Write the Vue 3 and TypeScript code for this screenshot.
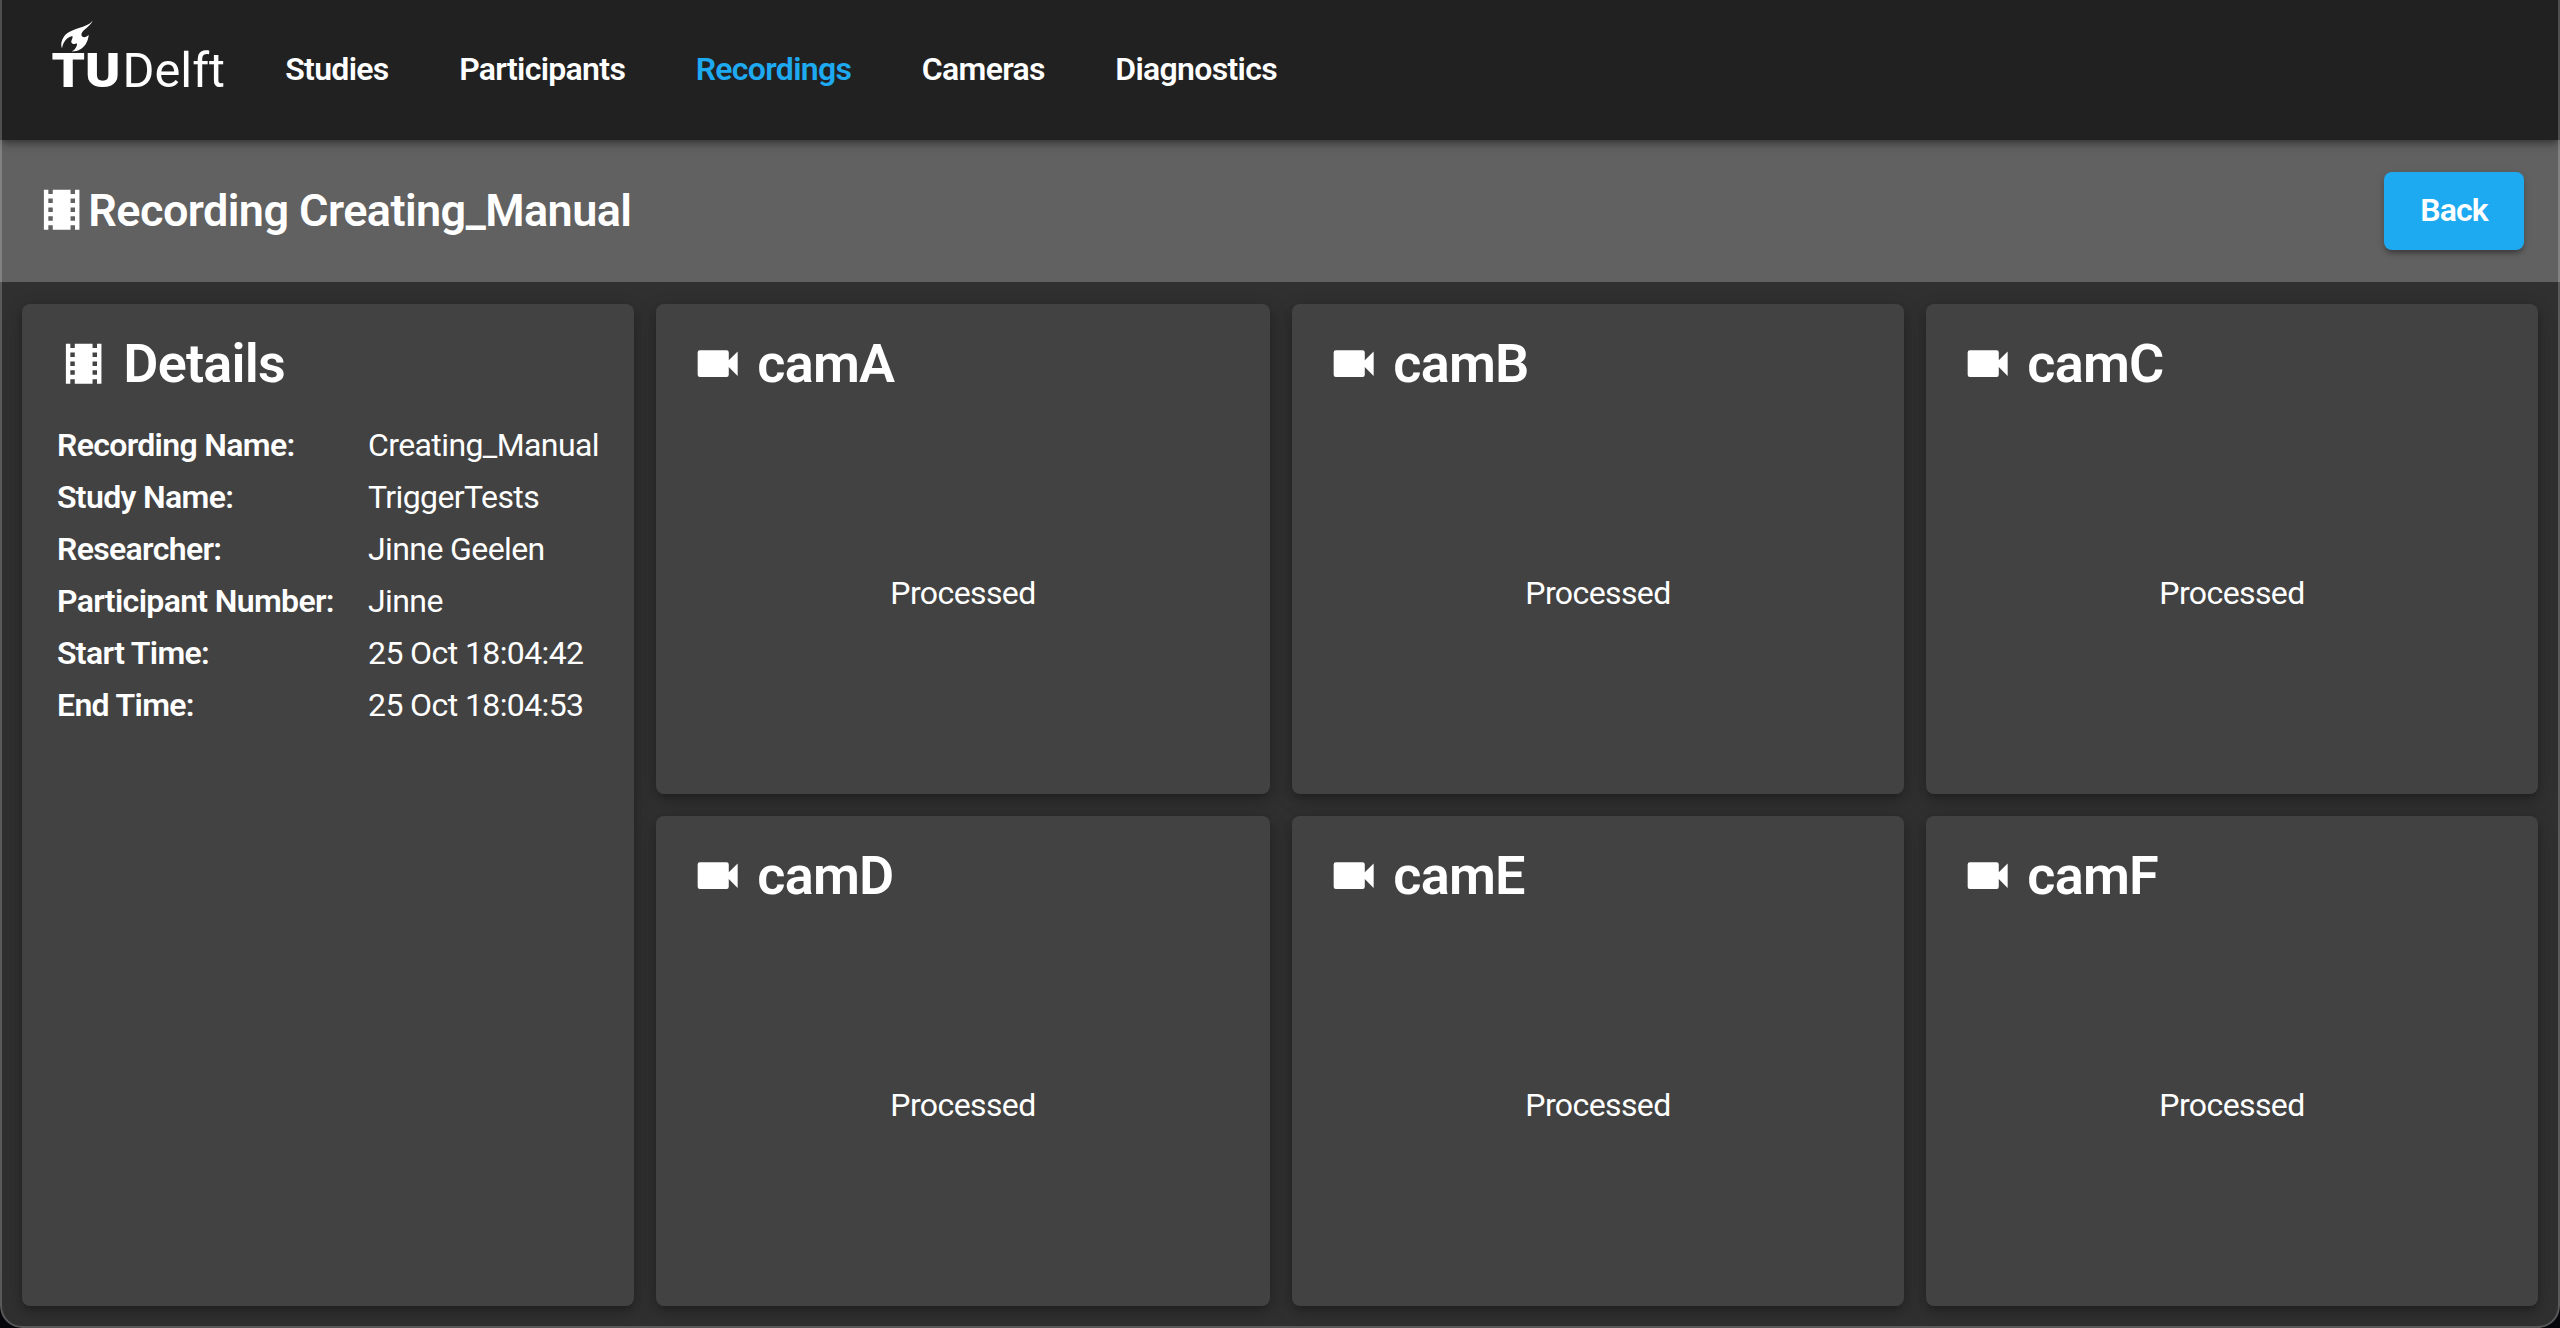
<script setup lang="ts">
interface NavItem { label: string; active?: boolean }
interface Detail { label: string; value: string }

const navItems: NavItem[] = [
  { label: 'Studies' },
  { label: 'Participants' },
  { label: 'Recordings', active: true },
  { label: 'Cameras' },
  { label: 'Diagnostics' },
]

const details: Detail[] = [
  { label: 'Recording Name:', value: 'Creating_Manual' },
  { label: 'Study Name:', value: 'TriggerTests' },
  { label: 'Researcher:', value: 'Jinne Geelen' },
  { label: 'Participant Number:', value: 'Jinne' },
  { label: 'Start Time:', value: '25 Oct 18:04:42' },
  { label: 'End Time:', value: '25 Oct 18:04:53' },
]

const cameras: string[] = ['camA', 'camB', 'camC', 'camD', 'camE', 'camF']

const filmstrip =
  'M18,9H16V7H18M18,13H16V11H18M18,17H16V15H18M8,9H6V7H8M8,13H6V11H8M8,17H6V15H8M18,3V5H16V3H8V5H6V3H4V21H6V19H8V21H16V19H18V21H20V3H18Z'
const video =
  'M17,10.5V7A1,1 0 0,0 16,6H4A1,1 0 0,0 3,7V17A1,1 0 0,0 4,18H16A1,1 0 0,0 17,17V13.5L21,17.5V6.5L17,10.5Z'
</script>

<template>
  <div class="desktop">
    <div class="window">
      <nav class="navbar">
        <svg class="logo" viewBox="0 0 180 80" role="img" aria-label="TU Delft">
          <path
            d="M42.700 10.300C40 14.500 35.500 16 30.500 17.500C24.500 19.500 17.500 21.500 14 26.500C11 31 10.600 35 12 38.600C13 32.500 16 28 21.500 26.300C23.500 26 22.500 28 21.500 30.500C20.500 33 23 34.600 25.300 33.800C28 32.500 27 35.500 26 37.200C24.800 39.500 23.500 40.500 21.500 41.500C29 41.500 33 38 35.500 34.500C37.500 31.500 38.500 28 38.700 24.800C36.500 27.500 32.500 28 31.500 25.500C31 23.500 32.500 21.500 34.500 19.800C38 17 41.500 14 42.700 10.300Z"
            fill="#fff"
          />
          <text x="1.500" y="77" class="logo-bold" textLength="69" lengthAdjust="spacingAndGlyphs">TU</text>
          <text x="72.500" y="77" class="logo-light" textLength="102.500" lengthAdjust="spacingAndGlyphs">Delft</text>
        </svg>
        <a v-for="item in navItems" :key="item.label" class="nav-link" :class="{ active: item.active }">{{ item.label }}</a>
      </nav>

      <header class="titlebar">
        <svg class="icon" viewBox="0 0 24 24"><path :d="filmstrip" /></svg>
        <h1>Recording Creating_Manual</h1>
        <button type="button" class="back">Back</button>
      </header>

      <main class="grid">
        <section class="card details">
          <div class="card-title">
            <svg class="icon" viewBox="0 0 24 24"><path :d="filmstrip" /></svg>
            <h2>Details</h2>
          </div>
          <dl>
            <template v-for="row in details" :key="row.label">
              <dt>{{ row.label }}</dt>
              <dd>{{ row.value }}</dd>
            </template>
          </dl>
        </section>
        <section v-for="camera in cameras" :key="camera" class="card">
          <div class="card-title">
            <svg class="icon" viewBox="0 0 24 24"><path :d="video" /></svg>
            <h2>{{ camera }}</h2>
          </div>
          <div class="status">Processed</div>
        </section>
      </main>
    </div>
  </div>
</template>

<style>
body {
  margin: 0;
  background: #05070c;
}
</style>

<style scoped>
.desktop {
  width: 2560px;
  height: 1328px;
  overflow: hidden;
  background: #05070c;
  color: #fff;
  font-family: Roboto, sans-serif;
  font-size: 32px;
  letter-spacing: -0.6px;
}
.window {
  position: relative;
  box-sizing: border-box;
  height: 1328px;
  padding: 0 2px 2px;
  display: flex;
  flex-direction: column;
  overflow: hidden;
  border-radius: 0 0 22px 22px;
  background: #303030;
}
/* translucent hairline around the window */
.window::after {
  content: '';
  position: absolute;
  inset: 0;
  border: 2px solid rgba(255, 255, 255, 0.2);
  border-top: 0;
  border-radius: 0 0 22px 22px;
  pointer-events: none;
  z-index: 3;
}
.navbar {
  position: relative;
  z-index: 2;
  flex: none;
  height: 140px;
  margin: 0 -2px;
  padding-left: 50px;
  box-sizing: border-box;
  display: flex;
  align-items: center;
  background: #212121;
  box-shadow: 0 4px 8px -2px rgba(0, 0, 0, 0.4), 0 2px 12px rgba(0, 0, 0, 0.2);
}
.logo {
  width: 180px;
  height: 80px;
  margin: 0 20px 40px 0;
  overflow: visible;
  letter-spacing: 0;
}
.logo-bold {
  font: 900 48px Roboto, sans-serif;
  fill: #fff;
}
.logo-light {
  font: 400 48px Roboto, sans-serif;
  fill: #fff;
}
.nav-link {
  margin: 0 35.25px;
  padding-bottom: 2px;
  font-weight: 600;
  letter-spacing: -0.68px;
}
.active {
  color: #1eaaf1;
}
.titlebar {
  flex: none;
  height: 142px;
  margin: 0 -2px;
  padding: 0 36px 0 35px;
  box-sizing: border-box;
  display: flex;
  align-items: center;
  background: #616161;
}
.icon {
  flex: none;
  width: 53.33px;
  height: 53.33px;
  fill: #fff;
}
.titlebar .icon {
  margin-bottom: 2px;
}
h1 {
  margin: 0;
  padding-bottom: 1px;
  font-size: 45px;
  font-weight: 600;
  letter-spacing: -0.57px;
  white-space: nowrap;
}
.back {
  margin-left: auto;
  width: 140px;
  height: 78px;
  padding: 0 0 3px;
  border: 0;
  border-radius: 8px;
  background: #1eaaf1;
  color: #fff;
  font: 600 32px Roboto, sans-serif;
  letter-spacing: -0.9px;
  box-shadow: 0 6px 4px -4px rgba(0, 0, 0, 0.2), 0 4px 4px rgba(0, 0, 0, 0.14), 0 2px 10px rgba(0, 0, 0, 0.12);
}
.grid {
  flex: 1;
  min-height: 0;
  box-sizing: border-box;
  padding: 22px 20px 20px;
  display: grid;
  grid-template-columns: 612px 614px 612px 612px;
  grid-template-rows: repeat(2, minmax(0, 1fr));
  gap: 22px;
}
.card {
  display: flex;
  flex-direction: column;
  border-radius: 8px;
  background: #424242;
  box-shadow: 0 4px 8px -2px rgba(0, 0, 0, 0.3), 0 6px 20px rgba(0, 0, 0, 0.2);
}
.details {
  grid-row: span 2;
}
.card-title {
  display: flex;
  align-items: center;
  flex: none;
  height: 119px;
  padding-left: 35px;
}
h2 {
  margin: 0 0 0 13px;
  font-size: 54px;
  font-weight: 600;
  letter-spacing: -0.8px;
}
dl {
  margin: -4px 0 0;
  padding-left: 35px;
  display: grid;
  grid-template-columns: 311px 1fr;
  grid-auto-rows: 52px;
  line-height: 52px;
  white-space: nowrap;
}
dt {
  font-weight: 650;
  letter-spacing: -0.66px;
}
dd {
  margin: 0;
}
.status {
  flex: 1;
  display: flex;
  align-items: center;
  justify-content: center;
  padding-bottom: 32px;
}
</style>
